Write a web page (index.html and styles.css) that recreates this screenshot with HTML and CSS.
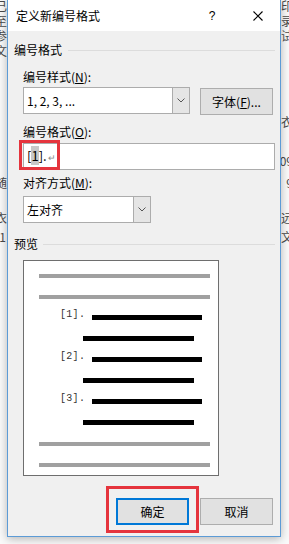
FILE: index.html
```html
<!DOCTYPE html>
<html lang="zh-CN">
<head>
    <meta charset="UTF-8">
    <meta name="viewport" content="width=device-width, initial-scale=1.0">
    <title>定义新编号格式</title>
    <link rel="stylesheet" href="styles.css">
</head>
<body>
    <!-- document behind the dialog -->
    <div class="doc">
        <div class="doc-line first"><span class="l">已</span><span class="r">印</span></div>
        <div class="doc-line"><span class="l">至</span><span class="r">录</span></div>
        <div class="doc-line"><span class="l">参</span><span class="r">试</span></div>
        <div class="doc-line"><span class="l">文</span><span class="r"></span></div>
        <div class="doc-line gap-56"><span class="l">。</span><span class="r">衣</span></div>
        <div class="doc-line gap-24"><span class="l">。</span><span class="r">09</span></div>
        <div class="doc-line gap-7"><span class="l">随</span><span class="r">9</span></div>
        <div class="doc-line gap-20"><span class="l">衣</span><span class="r">远</span></div>
        <div class="doc-line gap-4"><span class="l">-1</span><span class="r">文</span></div>
    </div>

    <div class="dialog">
        <div class="titlebar">
            <span class="title">定义新编号格式</span>
            <span class="help">?</span>
            <svg class="close" width="10" height="10" viewBox="0 0 10 10">
                <path d="M0.5 0.5 L9.5 9.5 M9.5 0.5 L0.5 9.5" stroke="#000" stroke-width="1.1" fill="none"/>
            </svg>
        </div>

        <div class="content">
            <div class="group-head"><span>编号格式</span><i class="rule"></i></div>

            <div class="label label-n">编号样式(<u>N</u>):</div>
            <div class="row">
                <div class="combo combo-style">
                    <span class="combo-text">1, 2, 3, ...</span>
                    <span class="combo-btn">
                        <svg width="8" height="5" viewBox="0 0 8 5"><path d="M0.5 0.5 L4 4 L7.5 0.5" stroke="#555" fill="none"/></svg>
                    </span>
                </div>
                <button class="btn btn-font">字体(<u>F</u>)...</button>
            </div>

            <div class="label label-o">编号格式(<u>O</u>):</div>
            <div class="input">[<span class="sel">1</span>].<span class="para">↵</span></div>

            <div class="label label-m">对齐方式(<u>M</u>):</div>
            <div class="combo combo-align">
                <span class="combo-text">左对齐</span>
                <span class="combo-btn">
                    <svg width="8" height="5" viewBox="0 0 8 5"><path d="M0.5 0.5 L4 4 L7.5 0.5" stroke="#555" fill="none"/></svg>
                </span>
            </div>

            <div class="group-head group-preview"><span>预览</span><i class="rule"></i></div>

            <div class="preview">
                <div class="pv-row"><i class="bar gray"></i></div>
                <div class="pv-row"><i class="bar gray"></i></div>
                <div class="pv-row num-row"><span class="num">[1].</span><i class="bar long"></i></div>
                <div class="pv-row sub-row"><i class="bar short"></i></div>
                <div class="pv-row num-row"><span class="num">[2].</span><i class="bar long"></i></div>
                <div class="pv-row sub-row"><i class="bar short"></i></div>
                <div class="pv-row num-row"><span class="num">[3].</span><i class="bar long"></i></div>
                <div class="pv-row sub-row"><i class="bar short"></i></div>
                <div class="pv-row"><i class="bar gray"></i></div>
                <div class="pv-row"><i class="bar gray"></i></div>
            </div>

            <div class="actions">
                <button class="btn btn-ok">确定</button>
                <button class="btn btn-cancel">取消</button>
            </div>
        </div>
    </div>

    <!-- red annotation boxes -->
    <div class="mark mark-fmt"></div>
    <div class="mark mark-ok"></div>
</body>
</html>
```

FILE: styles.css
```css
body {
    margin: 0;
    width: 289px;
    height: 544px;
    position: relative;
    overflow: hidden;
    background-color: #fafafa;
    font-family: "Noto Sans CJK SC", "Noto Sans", sans-serif;
    font-size: 12px;
    color: #000;
}

/* background document */
.doc {
    font-size: 12px;
    color: #4a4a4a;
}

.doc-line {
    display: flex;
    justify-content: space-between;
    height: 15px;
    line-height: 15px;
}

.doc-line.first { margin-top: -2px; }
.doc-line.gap-56 { margin-top: 56px; }
.doc-line.gap-24 { margin-top: 24px; }
.doc-line.gap-7 { margin-top: 7px; }
.doc-line.gap-20 { margin-top: 20px; }
.doc-line.gap-4 { margin-top: 4px; }

.doc-line .l { margin-left: -5px; }
.doc-line .r { margin-right: -4px; }

/* dialog window */
.dialog {
    position: absolute;
    top: -1px;
    left: 7px;
    width: 274px;
    height: 538px;
    box-sizing: border-box;
    border: 1px solid #5c9bd6;
    background-color: #f0f0f0;
    box-shadow: 0 2px 9px rgba(0,0,0,0.28);
}

.titlebar {
    height: 31px;
    background-color: #fff;
    display: flex;
    align-items: center;
}

.title {
    margin-left: 8px;
    line-height: 16px;
}

.help {
    margin-left: auto;
    width: 10px;
    text-align: center;
    font-size: 12px;
    line-height: 14px;
    font-family: "Liberation Sans", sans-serif;
}

.close {
    margin-left: 36px;
    margin-right: 17px;
}

.content {
    padding: 0 5px 0 15px;
}

.group-head {
    display: flex;
    align-items: center;
    height: 16px;
    line-height: 16px;
    margin-top: 11px;
    margin-left: -9px;
}

.group-head .rule {
    flex: 1;
    height: 1px;
    background-color: #dcdcdc;
    margin-left: 6px;
}

.group-preview {
    margin-top: 13px;
}

.group-preview .rule {
    margin-left: 5px;
}

.label {
    height: 16px;
    line-height: 16px;
}

.label-n { margin-top: 11px; }
.label-o { margin-top: 9px; }
.label-m { margin-top: 5px; }

.row {
    display: flex;
    margin-top: 2px;
}

.combo {
    height: 27px;
    box-sizing: border-box;
    border: 1px solid #acacac;
    background-color: #fff;
    display: flex;
    align-items: center;
}

.combo-style {
    width: 167px;
}

.combo-align {
    width: 128px;
    margin-top: 5px;
}

.combo-text {
    flex: 1;
    padding-left: 3px;
    line-height: 16px;
}

.combo-btn {
    width: 16px;
    align-self: stretch;
    display: flex;
    align-items: center;
    justify-content: center;
    background-color: #e5e5e5;
    border-left: 1px solid #acacac;
}

.btn {
    font-family: inherit;
    font-size: 12px;
    color: #000;
    background-color: #e1e1e1;
    border: 1px solid #adadad;
    box-sizing: border-box;
    height: 27px;
    padding: 0;
    line-height: 16px;
}

.btn-font {
    width: 73px;
    margin-left: 10px;
    margin-top: 1px;
}

.input {
    margin-top: 3px;
    height: 27px;
    box-sizing: border-box;
    border: 1px solid #acacac;
    background-color: #fff;
    padding-left: 3px;
    line-height: 24px;
    font-size: 13px;
}

.input .sel {
    background-color: #c8c8c8;
}

.input .para {
    font-size: 9px;
    color: #8a8a8a;
    margin-left: 1px;
}

/* preview pane */
.preview {
    margin-top: 8px;
    width: 196px;
    height: 216px;
    box-sizing: border-box;
    border: 1px solid #6e6e6e;
    background-color: #fff;
    padding-top: 4px;
}

.pv-row {
    height: 21px;
    display: flex;
    align-items: center;
    padding-left: 15px;
}

.num-row {
    padding-left: 36px;
}

.sub-row {
    padding-left: 59px;
}

.num {
    width: 32px;
    font-family: "Liberation Mono", monospace;
    font-size: 10px;
    color: #333;
    line-height: 12px;
    margin-top: -6px;
    letter-spacing: 0.3px;
}

.bar {
    display: block;
}

.bar.gray {
    width: 171px;
    height: 4px;
    background-color: #a0a0a0;
}

.bar.long {
    width: 110px;
    height: 5px;
    background-color: #000;
}

.bar.short {
    width: 111px;
    height: 5px;
    background-color: #000;
}

.actions {
    display: flex;
    justify-content: flex-end;
    margin-top: 22px;
    padding-right: 2px;
}

.btn-ok {
    width: 73px;
    border: 2px solid #0078d7;
}

.btn-cancel {
    width: 73px;
    margin-left: 11px;
}

/* annotations */
.mark {
    position: absolute;
    border: 3px solid #e5343d;
    box-sizing: border-box;
}

.mark-fmt {
    left: 19px;
    top: 140px;
    width: 41px;
    height: 30px;
}

.mark-ok {
    left: 106px;
    top: 486px;
    width: 93px;
    height: 47px;
}
```
